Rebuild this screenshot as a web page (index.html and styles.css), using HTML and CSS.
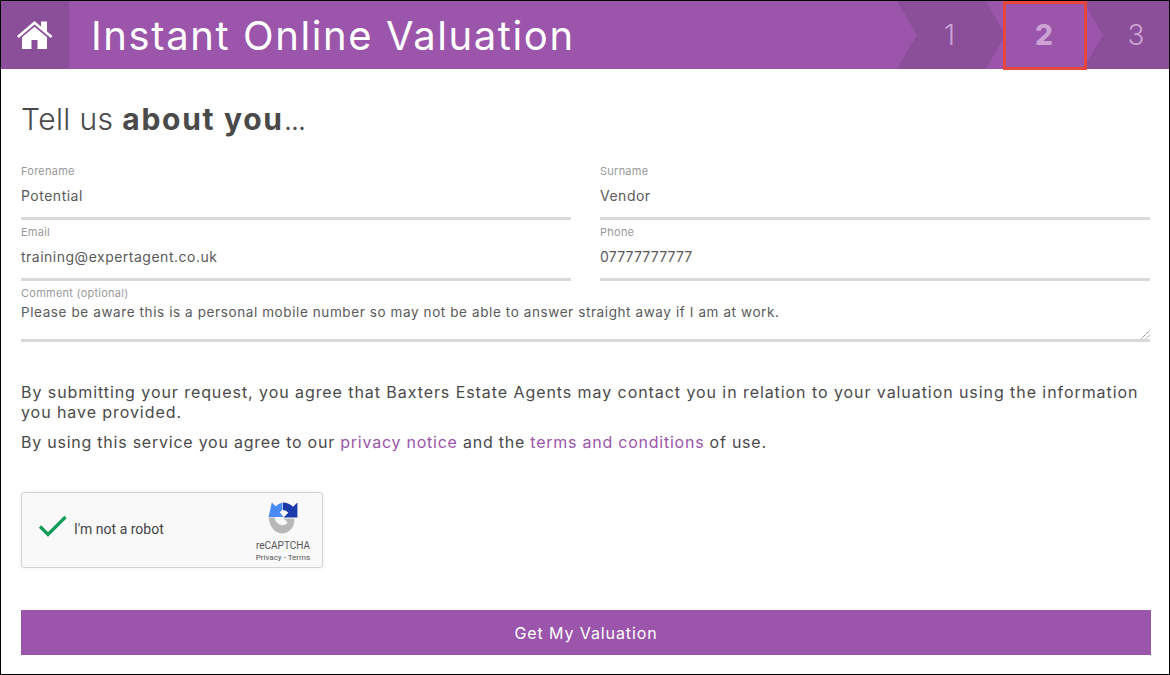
FILE: index.html
```html
<!DOCTYPE html>
<html lang="en">
<head>
<meta charset="utf-8">
<title>Instant Online Valuation</title>
<link rel="stylesheet" href="styles.css">
</head>
<body>
<div class="frame">
  <header class="topbar">
    <a class="home" aria-label="Home">
      <svg width="36" height="30" viewBox="0 0 36 30"><path fill="#fff" d="M17.500 1 24 6.500V1.500h6v10l5.500 4.500-1.700 2L17.500 4.600 1.700 18 0 16Z"/><path fill="#fff" d="M17.500 6.700 30 17.200V29H20.500V20h-6v9H5V17.200Z"/></svg>
    </a>
    <h1 class="title">Instant Online Valuation</h1>
    <ol class="steps">
      <li class="step step-first">1</li>
      <li class="step step-current">2</li>
      <li class="step step-last">3</li>
    </ol>
    <div class="highlight"></div>
  </header>
  <main class="content">
    <h2 class="heading">Tell us <strong>about you</strong><span class="dots">...</span></h2>
    <div class="fields">
      <div class="field"><label class="label">Forename</label><div class="value">Potential</div></div>
      <div class="field"><label class="label">Surname</label><div class="value">Vendor</div></div>
      <div class="field"><label class="label">Email</label><div class="value">training@expertagent.co.uk</div></div>
      <div class="field"><label class="label">Phone</label><div class="value value-digits">07777777777</div></div>
      <div class="field field-wide">
        <label class="label">Comment (optional)</label>
        <div class="comment">Please be aware this is a personal mobile number so may not be able to answer straight away if I am at work.
          <svg class="grip" width="9" height="9" viewBox="0 0 9 9"><path stroke="#555" stroke-dasharray="1 1" fill="none" d="M0.500 8.500 8.500 .5M5 8.500 8.500 5"/></svg>
        </div>
      </div>
    </div>
    <p class="note note-first">By submitting your request, you agree that Baxters Estate Agents may contact you in relation to your valuation using the information you have provided.</p>
    <p class="note note-second">By using this service you agree to our <a class="link">privacy notice</a> and the <a class="link">terms and conditions</a> of use.</p>
    <div class="captcha">
      <svg class="tick" width="30" height="22" viewBox="0 0 30 22"><path d="M2 11.500 10 19.500 27.500 2" fill="none" stroke="#0f9d58" stroke-width="3.200"/></svg>
      <span class="captcha-text">I'm not a robot</span>
      <div class="captcha-brand">
        <svg class="logo" width="30" height="32" viewBox="1.500 1.500 28 30">
          <path fill="#4a8af4" d="M5 2 8.500 5.500A14 14 0 0 1 15 2V9A7 7 0 0 0 12.500 11L16 15.500H2Z"/>
          <path fill="#1c3aa9" d="M15.500 2A14 14 0 0 1 25 6L29 2V16H16L20.500 11.500A7 7 0 0 0 15.500 9Z"/>
          <path fill="#b8b8b8" d="M2 16H8A7 7 0 0 0 20 21L16 17H26A12 12 0 0 1 15 31C8 31 3 25 2 16Z"/>
        </svg>
        <span class="brand-name">reCAPTCHA</span>
        <span class="brand-links">Privacy - Terms</span>
      </div>
    </div>
    <button class="submit" type="button">Get My Valuation</button>
  </main>
</div>
</body>
</html>
```
FILE: styles.css
```css
* { box-sizing: border-box; }
html, body { margin: 0; padding: 0; }
body {
  width: 1170px;
  height: 675px;
  overflow: hidden;
  background: #fff;
  font-family: Inter, "Open Sans", "Liberation Sans", sans-serif;
  color: #4a4a4a;
}
.frame {
  width: 1170px;
  height: 675px;
  border: 1px solid #000;
  display: flex;
  flex-direction: column;
}
.topbar {
  position: relative;
  display: flex;
  align-items: center;
  height: 68px;
  flex: none;
  background: #9b55aa;
}
.home {
  width: 68px;
  height: 68px;
  display: flex;
  align-items: center;
  justify-content: center;
  background: #8b4e99;
}
.title {
  margin: 0 0 0 22px;
  font-size: 40px;
  font-weight: 400;
  color: #fff;
  letter-spacing: 1.6px;
}
.steps {
  list-style: none;
  margin: 0 0 0 auto;
  padding: 0;
  display: flex;
  height: 68px;
}
.step {
  display: flex;
  align-items: center;
  justify-content: center;
  color: #cda3d6;
  font-size: 28px;
  font-weight: 300;
}
.step-first {
  width: 108px;
  padding-right: 3px;
  background: #8b4e99;
  clip-path: polygon(0 0, 89px 0, 100% 50%, 89px 100%, 0 100%, 20px 50%);
}
.step-current {
  width: 78px;
  font-weight: 800;
}
.step-last {
  width: 86px;
  padding-left: 20px;
  background: #8b4e99;
  clip-path: polygon(0 0, 100% 0, 100% 100%, 0 100%, 20px 50%);
}
.highlight {
  position: absolute;
  left: 1002px;
  top: 0;
  width: 84px;
  height: 69px;
  border: 3px solid #e8463c;
}
.content {
  flex: 1;
  padding: 0 19px 0 20px;
  display: flex;
  flex-direction: column;
}
.heading {
  margin: 30px 0 0;
  height: 40px;
  line-height: 40px;
  font-size: 30px;
  font-weight: 300;
  letter-spacing: .4px;
  color: #4a4a4a;
}
.heading strong { font-weight: 700; letter-spacing: 1.7px; }
.dots { letter-spacing: -1.5px; }
.fields {
  display: grid;
  grid-template-columns: 550px 550px;
  column-gap: 29px;
  margin-top: 22px;
}
.field { height: 61px; }
.label {
  display: block;
  font-size: 11px;
  line-height: 14px;
  padding-top: 3px;
  height: 17px;
  letter-spacing: .25px;
  color: #999;
}
.value {
  height: 42px;
  line-height: 36px;
  font-size: 14px;
  letter-spacing: .5px;
  color: #5a5a5a;
  border-bottom: 3px solid #d9d9d9;
}
.value-digits { letter-spacing: .2px; }
.field-wide { grid-column: 1 / -1; height: 59px; }
.comment {
  position: relative;
  height: 42px;
  font-size: 13.500px;
  line-height: 18px;
  padding-top: 3px;
  letter-spacing: .6px;
  color: #5a5a5a;
  border-bottom: 3px solid #d9d9d9;
}
.grip { position: absolute; right: 0; bottom: 0; }
.note {
  margin: 0 0 10px;
  font-size: 16px;
  line-height: 20px;
  color: #4a4a4a;
}
.note-first { margin-top: 40px; letter-spacing: .93px; }
.note-second { letter-spacing: .76px; }
.link { color: #9b55aa; }
.captcha {
  margin-top: 30px;
  width: 302px;
  height: 76px;
  border: 1px solid #d3d3d3;
  border-radius: 3px;
  background: #f9f9f9;
  box-shadow: 0 0 4px rgba(0,0,0,.08);
  display: flex;
  align-items: center;
}
.tick { margin-left: 16px; margin-top: -9px; }
.captcha-text {
  margin-left: 6px;
  margin-top: -2px;
  font-family: Roboto, sans-serif;
  font-size: 14px;
  color: #444;
}
.captcha-brand {
  margin-left: auto;
  margin-right: 9px;
  width: 60px;
  align-self: flex-start;
  padding-top: 9px;
  display: flex;
  flex-direction: column;
  align-items: center;
  font-family: Roboto, sans-serif;
  color: #555;
}
.logo { display: block; }
.brand-name { font-size: 10px; line-height: 12px; margin-top: 6px; }
.brand-links { font-size: 8px; line-height: 12px; }
.submit {
  margin-top: 42px;
  width: 1130px;
  height: 45px;
  flex: none;
  border: 0;
  background: #9b55aa;
  color: #fff;
  font-family: inherit;
  font-size: 16px;
  font-weight: 400;
  letter-spacing: .9px;
}
```
